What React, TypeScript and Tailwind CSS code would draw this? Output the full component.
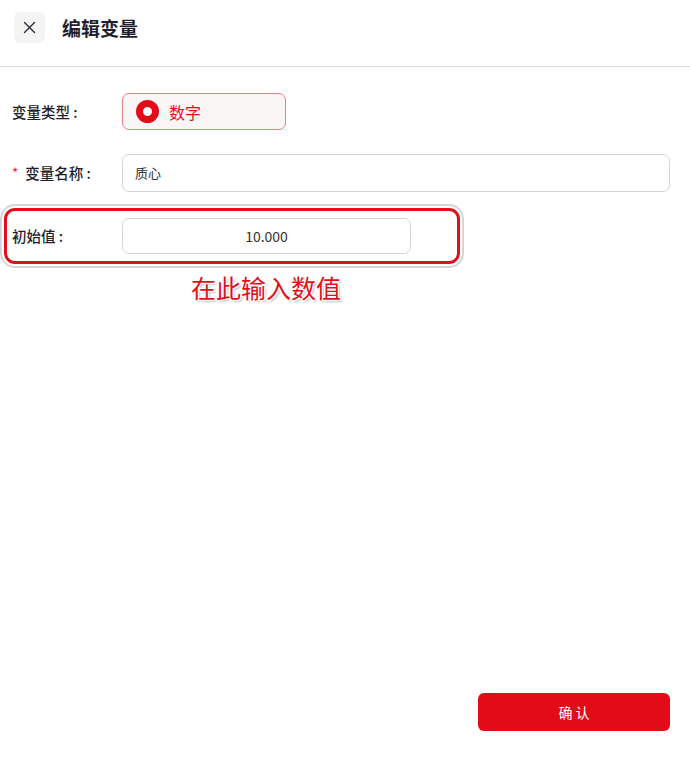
import React from "react";

export default function App() {
  const font = { fontFamily: '"Noto Sans CJK SC", "Noto Sans", sans-serif' };
  return (
    <div className="w-[690px] h-[767px] bg-white relative text-[#222]" style={font}>
      <div className="h-[67px] border-b border-[#d9d9d9] flex items-center pl-[14px]">
        <div className="w-[31px] h-[31px] rounded-[6px] bg-[#f4f4f4] flex items-center justify-center -mt-[12px]">
          <svg width="13" height="13" viewBox="0 0 13 13" fill="none" stroke="#2a2a3a" strokeWidth="1.4" strokeLinecap="round">
            <path d="M1.5 1.5 L11.5 11.5 M11.5 1.5 L1.5 11.5" />
          </svg>
        </div>
        <div className="ml-[17px] -mt-[11px] text-[19px] font-bold text-[#1f1f2e] leading-none">编辑变量</div>
      </div>

      <div className="flex flex-col pt-[26px]">
        <div className="flex items-center h-[37px]">
          <div className="w-[122px] pl-[12px] text-[14.5px] font-medium text-[#1f1f2e]">变量类型&nbsp;:</div>
          <div className="w-[164px] h-[37px] rounded-[7px] border border-[#e87e7e] bg-[#fbf6f6] flex items-center pl-[13px]">
            <div className="w-[23px] h-[23px] rounded-full border-[7px] border-[#e30b17] bg-white"></div>
            <div className="ml-[10px] text-[16px] text-[#e30b17]">数字</div>
          </div>
        </div>

        <div className="flex items-center h-[38px] mt-[24px]">
          <div className="w-[122px] pl-[12px] text-[14.5px] font-medium text-[#1f1f2e] flex items-center">
            <span className="text-[#e03a3a] mr-[7px] text-[13px]">*</span>变量名称&nbsp;:
          </div>
          <div className="w-[548px] h-[38px] rounded-[7px] border border-[#d4d4d4] flex items-center pl-[12px] text-[13px] text-[#333]">
            质心
          </div>
        </div>

        <div className="ml-[4px] mt-[16px] w-[456px] h-[56px] rounded-[11px] border-[3px] border-[#e0101a] shadow-[0_0_0_2px_#fff,0_0_0_4px_#d6d6d6] flex items-center">
          <div className="w-[115px] pl-[5px] text-[14.5px] font-medium text-[#1f1f2e]">初始值&nbsp;:</div>
          <div className="w-[289px] h-[36px] rounded-[7px] border border-[#d4d4d4] flex items-center justify-center text-[14px] text-[#333]">
            10.000
          </div>
        </div>

        <div
          className="ml-[191px] mt-[7px] text-[25px] text-[#e0101a] leading-[32px]"
          style={{ textShadow: "1px 1px 0 #fff, -1px -1px 0 #fff, 1px -1px 0 #fff, -1px 1px 0 #fff, 2px 2px 2px #bbb" }}
        >
          在此输入数值
        </div>
      </div>

      <div className="absolute left-[478px] top-[693px] w-[192px] h-[38px] rounded-[6px] bg-[#e30b17] text-white text-[14px] flex items-center justify-center">
        确&nbsp;认
      </div>
    </div>
  );
}
